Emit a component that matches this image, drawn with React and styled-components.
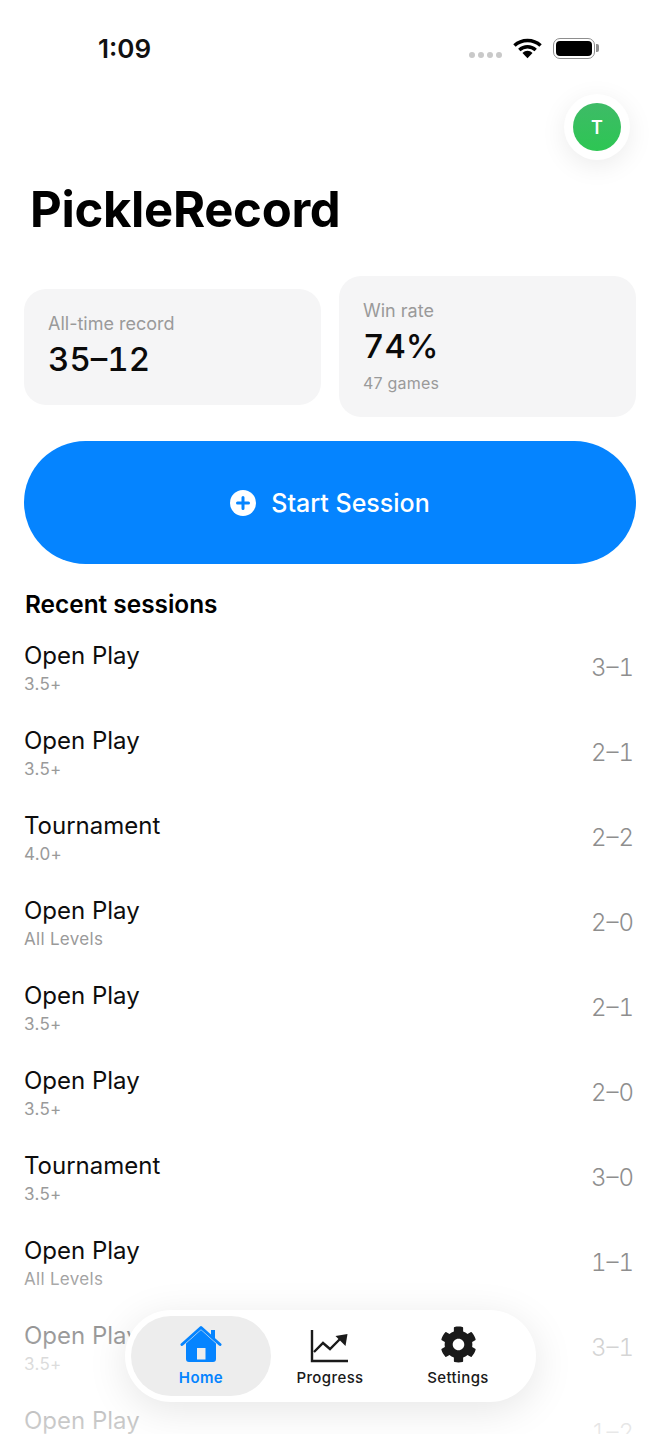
import React from 'react';
import styled, { createGlobalStyle } from 'styled-components';
import { FaCog } from 'react-icons/fa';

const GlobalStyle = createGlobalStyle`
    html, body{
        margin: 0;
        padding: 0;
        background: #FFFFFF;
    }
    *{
        box-sizing: border-box;
    }
`;

const sessions = [
    { name: 'Open Play', level: '3.5+', score: '3–1' },
    { name: 'Open Play', level: '3.5+', score: '2–1' },
    { name: 'Tournament', level: '4.0+', score: '2–2' },
    { name: 'Open Play', level: 'All Levels', score: '2–0' },
    { name: 'Open Play', level: '3.5+', score: '2–1' },
    { name: 'Open Play', level: '3.5+', score: '2–0' },
    { name: 'Tournament', level: '3.5+', score: '3–0' },
    { name: 'Open Play', level: 'All Levels', score: '1–1' },
    { name: 'Open Play', level: '3.5+', score: '3–1' },
    { name: 'Open Play', level: '3.5+', score: '1–2' },
];

export default function App(){
    return(
        <Page>
            <GlobalStyle />
            <StatusBar>
                <Clock>1:09</Clock>
                <StatusIcons>
                    <Signal><i /><i /><i /><i /></Signal>
                    <svg width="29" height="22" viewBox="0 0 30 22">
                        <path d="M1.5 8.5 C9 1.5 21 1.5 28.5 8.5" fill="none" stroke="#000" strokeWidth="3.6" />
                        <path d="M6.5 13 C11.5 8.6 18.5 8.6 23.5 13" fill="none" stroke="#000" strokeWidth="3.6" />
                        <path d="M9.8 16.2 C13 13 17 13 20.2 16.2 L15 21.5 Z" fill="#000" />
                    </svg>
                    <Battery><BatteryFill /></Battery>
                </StatusIcons>
            </StatusBar>

            <AvatarRow>
                <AvatarRing>
                    <Avatar>T</Avatar>
                </AvatarRing>
            </AvatarRow>

            <Title>PickleRecord</Title>

            <Stats>
                <StatCard>
                    <StatLabel>All-time record</StatLabel>
                    <StatValue>35–12</StatValue>
                </StatCard>
                <StatCard>
                    <StatLabel>Win rate</StatLabel>
                    <StatValue>74%</StatValue>
                    <StatNote>47 games</StatNote>
                </StatCard>
            </Stats>

            <StartButton>
                <svg width="26" height="26" viewBox="0 0 26 26">
                    <circle cx="13" cy="13" r="13" fill="#FFFFFF" />
                    <path d="M13 7.5V18.5M7.5 13H18.5" stroke="#0584FF" strokeWidth="3" strokeLinecap="round" />
                </svg>
                Start Session
            </StartButton>

            <SectionTitle>Recent sessions</SectionTitle>

            <SessionList>
                {sessions.map((session, index) => (
                    <SessionRow key={index}>
                        <div>
                            <SessionName>{session.name}</SessionName>
                            <SessionLevel>{session.level}</SessionLevel>
                        </div>
                        <SessionScore>{session.score}</SessionScore>
                    </SessionRow>
                ))}
            </SessionList>

            <BottomFade />

            <TabBar>
                <Tab active width={140}>
                    <svg width="42" height="38" viewBox="0 0 42 38">
                        <path d="M6 18.5 L21 5 L36 18.5 V34 Q36 37 33 37 H9 Q6 37 6 34 Z M17 23 V34.5 H25.5 V23 Z" fill="#0584FF" fillRule="evenodd" />
                        <path d="M2 19.5 L21 2.5 L40 19.5" fill="none" stroke="#0584FF" strokeWidth="3" strokeLinecap="round" strokeLinejoin="round" />
                        <path d="M31 5 H35 V14 L31 10 Z" fill="#0584FF" />
                    </svg>
                    <TabLabel active>Home</TabLabel>
                </Tab>
                <Tab width={118}>
                    <svg width="40" height="34" viewBox="0 0 40 34">
                        <path d="M2 1 V32 H38" fill="none" stroke="#1A1A1A" strokeWidth="2.4" />
                        <path d="M4 23 L13 14 L20 20 L30 10" fill="none" stroke="#1A1A1A" strokeWidth="2.4" />
                        <path d="M25.5 7 L37.5 5 L35.5 17 Z" fill="#1A1A1A" />
                    </svg>
                    <TabLabel>Progress</TabLabel>
                </Tab>
                <Tab width={138}>
                    <FaCog size={37} color="#1A1A1A" />
                    <TabLabel>Settings</TabLabel>
                </Tab>
            </TabBar>
        </Page>
    );
}

const Page = styled.div`
    position: relative;
    width: 660px;
    height: 1434px;
    overflow: hidden;
    background: #FFFFFF;
    font-family: 'Inter', sans-serif;
    padding: 0 24px;
`;

const StatusBar = styled.div`
    height: 94px;
    display: flex;
    justify-content: space-between;
    align-items: center;
    padding: 2px 38px 0 74px;
`;

const Clock = styled.span`
    font-size: 26px;
    font-weight: 600;
    color: #111111;
`;

const StatusIcons = styled.div`
    display: flex;
    align-items: center;
    gap: 11px;
`;

const Signal = styled.div`
    display: flex;
    gap: 3px;
    margin-top: 14px;
    i{
        width: 6px;
        height: 6px;
        border-radius: 50%;
        background: #C9C9C9;
    }
`;

const Battery = styled.div`
    position: relative;
    width: 42px;
    height: 21px;
    padding: 2px;
    border: 1.5px solid #8E8E8E;
    border-radius: 7px;
    margin-right: 3px;
    &::after{
        content: '';
        position: absolute;
        right: -5px;
        top: 5px;
        width: 3px;
        height: 8px;
        border-radius: 0 2px 2px 0;
        background: #8E8E8E;
    }
`;

const BatteryFill = styled.div`
    width: 100%;
    height: 100%;
    border-radius: 4px;
    background: #000000;
`;

const AvatarRow = styled.div`
    height: 66px;
    display: flex;
    justify-content: flex-end;
    margin-right: 6px;
`;

const AvatarRing = styled.div`
    width: 66px;
    height: 66px;
    border-radius: 50%;
    background: #FFFFFF;
    display: flex;
    justify-content: center;
    align-items: center;
    box-shadow: 0 6px 26px rgba(0, 0, 0, 0.08);
`;

const Avatar = styled.div`
    width: 48px;
    height: 48px;
    border-radius: 50%;
    background: linear-gradient(180deg, #3EBB67 0%, #2DC653 100%);
    color: #FFFFFF;
    font-size: 18px;
    font-weight: 600;
    display: flex;
    justify-content: center;
    align-items: center;
`;

const Title = styled.h1`
    margin: 22px 0 0 6px;
    font-size: 49px;
    line-height: 56px;
    font-weight: 700;
    color: #000000;
    letter-spacing: -0.3px;
`;

const Stats = styled.div`
    display: flex;
    align-items: center;
    gap: 18px;
    margin-top: 38px;
`;

const StatCard = styled.div`
    flex: 1;
    padding: 24px 24px 26px;
    border-radius: 22px;
    background: #F5F5F6;
`;

const StatLabel = styled.div`
    font-size: 18px;
    line-height: 22px;
    color: #9A9A9A;
`;

const StatValue = styled.div`
    margin-top: 4px;
    font-size: 33px;
    line-height: 40px;
    font-weight: 550;
    font-variant-numeric: tabular-nums;
    color: #0A0A0A;
`;

const StatNote = styled.div`
    margin-top: 9px;
    font-size: 16px;
    line-height: 16px;
    letter-spacing: 0.2px;
    color: #9A9A9A;
`;

const StartButton = styled.button`
    width: 100%;
    height: 123px;
    margin-top: 24px;
    border: none;
    border-radius: 62px;
    background: #0584FF;
    color: #FFFFFF;
    font-family: inherit;
    font-size: 25px;
    font-weight: 500;
    display: flex;
    justify-content: center;
    align-items: center;
    gap: 15px;
`;

const SectionTitle = styled.h2`
    margin: 25px 0 0 1px;
    font-size: 24.4px;
    line-height: 30px;
    font-weight: 600;
    color: #000000;
`;

const SessionList = styled.div`
    margin-top: 6px;
`;

const SessionRow = styled.div`
    height: 85px;
    padding: 0 2px 0 0;
    display: flex;
    justify-content: space-between;
    align-items: center;
`;

const SessionName = styled.div`
    font-size: 24px;
    line-height: 30px;
    color: #0D0D0D;
`;

const SessionLevel = styled.div`
    font-size: 17px;
    line-height: 20px;
    margin-top: 3px;
    letter-spacing: 0.3px;
    color: #9A9A9A;
`;

const SessionScore = styled.div`
    font-size: 24px;
    font-weight: 300;
    font-variant-numeric: tabular-nums;
    color: #8E8E8E;
`;

const BottomFade = styled.div`
    position: absolute;
    left: 0;
    right: 0;
    bottom: 0;
    height: 164px;
    background: linear-gradient(180deg, rgba(255, 255, 255, 0) 0%, rgba(255, 255, 255, 0.55) 30%, rgba(255, 255, 255, 0.8) 100%);
`;

const TabBar = styled.nav`
    position: absolute;
    left: 125px;
    bottom: 32px;
    width: 411px;
    height: 92px;
    padding: 6px;
    border-radius: 46px;
    background: #FFFFFF;
    box-shadow: 0 8px 40px rgba(0, 0, 0, 0.1);
    display: flex;
    align-items: stretch;
`;

const Tab = styled.div`
    flex: 0 0 ${props => props.width}px;
    border-radius: 40px;
    background: ${props => props.active ? '#EDEDED' : 'transparent'};
    display: flex;
    flex-direction: column;
    justify-content: flex-end;
    align-items: center;
    gap: 6px;
    padding-bottom: 9px;
`;

const TabLabel = styled.span`
    font-size: 15px;
    line-height: 18px;
    font-weight: ${props => props.active ? 600 : 450};
    letter-spacing: 0.4px;
    color: ${props => props.active ? '#0584FF' : '#1A1A1A'};
`;
